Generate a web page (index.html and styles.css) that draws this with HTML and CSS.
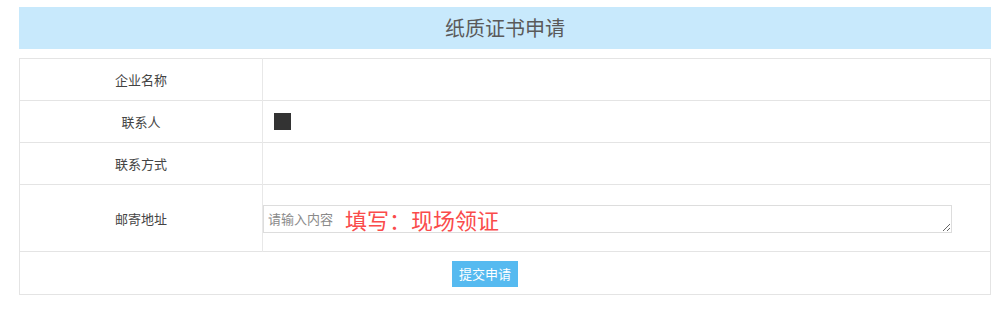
FILE: index.html
```html
<!DOCTYPE html>
<html lang="zh-CN">
<head>
    <meta charset="UTF-8">
    <title>纸质证书申请</title>
    <link rel="stylesheet" href="styles.css">
</head>
<body>
    <div class="wrap">
        <div class="title">纸质证书申请</div>
        <table class="form">
            <tr class="row">
                <td class="label">企业名称</td>
                <td class="value"></td>
            </tr>
            <tr class="row">
                <td class="label">联系人</td>
                <td class="value"><span class="mask"></span></td>
            </tr>
            <tr class="row">
                <td class="label">联系方式</td>
                <td class="value"></td>
            </tr>
            <tr class="row tall">
                <td class="label">邮寄地址</td>
                <td class="value">
                    <div class="area-box">
                        <textarea class="area" placeholder="请输入内容"></textarea>
                        <span class="note">填写：现场领证</span>
                    </div>
                </td>
            </tr>
            <tr class="row foot">
                <td colspan="2"><button class="submit">提交申请</button></td>
            </tr>
        </table>
    </div>
</body>
</html>
```

FILE: styles.css
```css
body {
    margin: 0;
    background: #fff;
    font-family: "Noto Sans CJK SC", "Liberation Sans", sans-serif;
    color: #333;
}

.wrap {
    width: 972px;
    padding: 7px 0 0 19px;
}

.title {
    height: 42px;
    line-height: 42px;
    background: #c8e9fc;
    text-align: center;
    font-size: 20px;
    color: #5a5a5a;
    margin-bottom: 9px;
}

.form {
    width: 100%;
    border-collapse: collapse;
    border: 1px solid #e4e4e4;
}

.row td {
    border-top: 1px solid #e4e4e4;
    height: 41px;
    padding: 0;
}

.row.tall td {
    height: 66px;
}

.row.foot td {
    height: 42px;
    text-align: center;
    padding-right: 40px;
}

.label {
    width: 242px;
    text-align: center;
    font-size: 13px;
    color: #444;
    border-right: 1px solid #e8e8e8;
}

.value {
    font-size: 13px;
}

.mask {
    display: block;
    width: 17px;
    height: 17px;
    margin-left: 11px;
    background: #333;
}

.area-box {
    position: relative;
    width: 689px;
    margin-top: 1px;
}

.area {
    display: block;
    box-sizing: border-box;
    width: 689px;
    height: 28px;
    margin: 0;
    padding: 5px 4px;
    border: 1px solid #ddd;
    font-family: inherit;
    font-size: 13px;
    line-height: 16px;
    color: #333;
}

.area::placeholder {
    color: #8a8a8a;
}

.note {
    position: absolute;
    left: 82px;
    top: 0;
    line-height: 28px;
    font-size: 22px;
    color: #fa4b4b;
    pointer-events: none;
}

.submit {
    width: 66px;
    height: 26px;
    border: none;
    background: #56baf0;
    color: #fff;
    font-family: inherit;
    font-size: 13px;
    padding: 0;
    vertical-align: middle;
}
```
